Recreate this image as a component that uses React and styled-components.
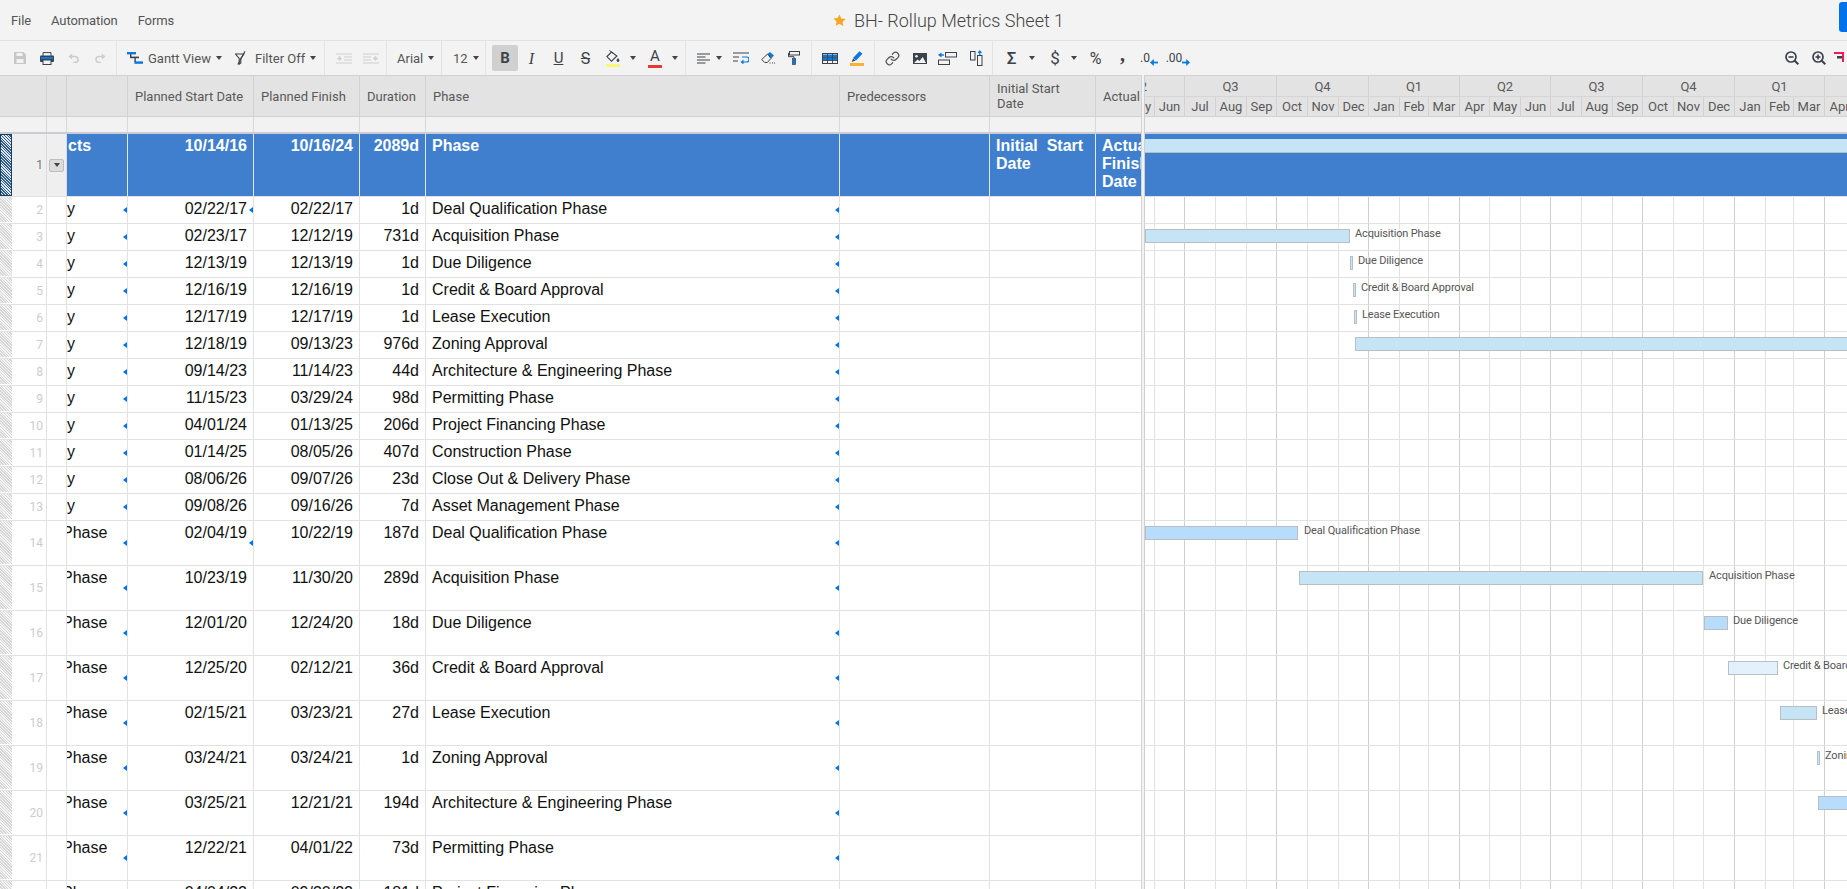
import React from 'react'
import styled, { createGlobalStyle } from 'styled-components'
import { Link } from 'lucide-react'

const GlobalStyle = createGlobalStyle`
  html, body { margin: 0; padding: 0; background: #fff; }
  body { font-family: Roboto, "Liberation Sans", sans-serif; overflow: hidden; }
  * { box-sizing: border-box; }
`

const COLS = '12px 35px 20px 61px 126px 106px 66px 414px 150px 106px 45px'
const DARK = '#3c4249'
const BLUE = '#0a78e0'

const Page = styled.div`
  width: 1847px;
  height: 889px;
  overflow: hidden;
  display: flex;
  flex-direction: column;
`

const TopBar = styled.div`
  height: 41px;
  flex: none;
  display: flex;
  align-items: center;
  background: #f3f3f3;
  border-bottom: 1px solid #e2e2e2;
`

const Menu = styled.div`
  width: 833px;
  flex: none;
  display: flex;
  gap: 20px;
  padding-left: 11px;
  font-size: 13px;
  letter-spacing: -0.1px;
  color: #555;
`

const Title = styled.div`
  display: flex;
  align-items: center;
  gap: 8px;
  font-size: 18px;
  font-weight: 300;
  color: #444;
`

const ShareButton = styled.div`
  margin-left: auto;
  width: 8px;
  height: 30px;
  margin-top: -6px;
  background: #0073ec;
  border-radius: 3px 0 0 3px;
`

const Toolbar = styled.div`
  height: 34px;
  flex: none;
  display: flex;
  background: #f3f3f3;
  overflow: hidden;
`

const Group = styled.div`
  width: ${p => p.$w}px;
  flex: none;
  display: flex;
  align-items: center;
  padding-left: ${p => p.$pad || 0}px;
  border-right: ${p => (p.$plain ? 'none' : '1px solid #e3e3e3')};
`

const RightTools = styled(Group)`
  margin-left: auto;
`

const Slot = styled.div`
  width: ${p => p.$w || 27}px;
  flex: none;
  height: 26px;
  display: flex;
  flex-direction: column;
  align-items: center;
  justify-content: center;
  color: ${DARK};
`

const LabelTool = styled.div`
  width: ${p => p.$w}px;
  flex: none;
  display: flex;
  align-items: center;
  font-size: 13px;
  color: #555;
`

const ToolText = styled.span`
  margin-left: ${p => p.$left || 0}px;
  margin-right: 5px;
`

const Caret = styled.span`
  width: 0;
  height: 0;
  flex: none;
  border-left: 3px solid transparent;
  border-right: 3px solid transparent;
  border-top: 4px solid #444;
`

const Active = styled(Slot)`
  width: 26px;
  margin-left: 1px;
  background: #d0d0d0;
  border-radius: 2px;
`

const Glyph = styled.span`
  font-size: ${p => p.$size || 15}px;
  line-height: 15px;
  font-weight: ${p => p.$weight || 400};
  font-style: ${p => (p.$italic ? 'italic' : 'normal')};
  font-family: ${p => (p.$serif ? '"Liberation Serif", serif' : 'Roboto, sans-serif')};
  text-decoration: ${p => p.$line || 'none'};
  transform: translateY(${p => p.$lift || 0}px);
  color: ${DARK};
`

const ColorBar = styled.span`
  width: 14px;
  height: 3px;
  margin-top: 1px;
  background: ${p => p.$color};
`

const DecimalTool = styled.div`
  display: flex;
  align-items: flex-end;
`

const Main = styled.div`
  flex: 1;
  display: flex;
  min-height: 0;
  overflow: hidden;
`

const Sheet = styled.div`
  width: 1141px;
  flex: none;
  overflow: hidden;
`

const Splitter = styled.div`
  width: 4px;
  flex: none;
  background: #f2f2f2;
  border-left: 1px solid #d4d4d4;
  border-right: 1px solid #cfcfcf;
`

const HeadRow = styled.div`
  display: grid;
  grid-template-columns: ${COLS};
  height: 42px;
  background: #e3e3e3;
  border-top: 1px solid #d2d2d2;
  border-bottom: 1px solid #d2d2d2;
`

const HeadCell = styled.div`
  display: flex;
  align-items: center;
  padding: 0 7px;
  overflow: hidden;
  font-size: 13px;
  line-height: 15px;
  color: #595959;
  white-space: pre-line;
  border-right: ${p => (p.$open ? 'none' : '1px solid #d2d2d2')};
`

const FilterRow = styled.div`
  display: grid;
  grid-template-columns: ${COLS};
  height: 17px;
  background: #f2f2f2;
  border-bottom: 2px solid #c9ced4;
`

const FilterCell = styled.div`
  border-right: ${p => (p.$open ? 'none' : '1px solid #d8d8d8')};
`

const SummaryRow = styled.div`
  display: grid;
  grid-template-columns: ${COLS};
  height: 63px;
  border-bottom: 1px solid #e2e2e2;
`

const SummaryCell = styled.div`
  background: #3f7fce;
  padding: 3px ${p => (p.$flush ? 0 : 6)}px 0 ${p => (p.$flush ? 1 : 6)}px;
  overflow: hidden;
  font-family: "Liberation Sans", Arial, sans-serif;
  font-size: 16px;
  font-weight: 700;
  line-height: 18px;
  color: #fff;
  white-space: pre;
  text-align: ${p => (p.$right ? 'right' : 'left')};
  border-right: ${p => (p.$open ? 'none' : '1px solid #dfe8f4')};
`

const GutterCell = styled.div`
  display: flex;
  align-items: center;
  justify-content: ${p => p.$center ? 'center' : 'flex-end'};
  padding-right: ${p => p.$center ? 0 : 3}px;
  background: ${p => p.$shade ? '#efefef' : '#fff'};
  font-size: 12px;
  color: ${p => p.$shade ? '#777' : '#ccc'};
  border-right: 1px solid ${p => p.$shade ? '#dcdcdc' : '#e2e2e2'};
`

const Handle = styled.div`
  margin-bottom: ${p => (p.$active ? 0 : 1)}px;
  background: repeating-linear-gradient(
    45deg,
    ${p => (p.$active ? '#2f5d8a' : '#d6d6d6')} 0 1px,
    ${p => (p.$active ? '#dfe7ef' : '#f5f5f5')} 1px 2px
  );
  border: ${p => (p.$active ? '1px solid #1d3f63' : 'none')};
`

const RowMenu = styled.div`
  width: 15px;
  height: 13px;
  display: flex;
  align-items: center;
  justify-content: center;
  background: #dcdcdc;
  border: 1px solid #bdbdbd;
  border-radius: 2px;
`

const Row = styled.div`
  display: grid;
  grid-template-columns: ${COLS};
  height: ${p => (p.$tall ? 45 : 27)}px;
  border-bottom: 1px solid #e2e2e2;
`

const Cell = styled.div`
  position: relative;
  padding: 1px ${p => (p.$flush ? 0 : 6)}px 0;
  overflow: hidden;
  font-family: "Liberation Sans", Arial, sans-serif;
  font-size: 16px;
  line-height: 22px;
  color: #111;
  white-space: nowrap;
  text-align: ${p => (p.$right ? 'right' : 'left')};
  text-indent: ${p => p.$indent || 0}px;
  border-right: ${p => (p.$open ? 'none' : '1px solid #e2e2e2')};
`

const Marker = styled.span`
  position: absolute;
  right: 0;
  top: 50%;
  margin-top: -3px;
  width: 0;
  height: 0;
  border-top: 3px solid transparent;
  border-bottom: 3px solid transparent;
  border-right: 4px solid #0073ec;
`

const Gantt = styled.div`
  flex: 1;
  min-width: 0;
  overflow: hidden;
  background: #fff;
`

const TimeHead = styled.div`
  height: 42px;
  margin-left: -52px;
  display: flex;
  flex-direction: column;
  background: #e3e3e3;
  border-top: 1px solid #d2d2d2;
  border-bottom: 1px solid #d2d2d2;
`

const TimeRow = styled.div`
  display: flex;
  flex: ${p => (p.$months ? 1 : 'none')};
  height: ${p => (p.$months ? 'auto' : '21px')};
  border-bottom: ${p => (p.$months ? 'none' : '1px solid #d6d6d6')};
`

const TimeCell = styled.div`
  width: ${p => p.$w}px;
  flex: none;
  display: flex;
  align-items: center;
  justify-content: center;
  font-size: 13px;
  color: #595959;
  border-left: 1px solid #d2d2d2;
`

const GanttFilter = styled.div`
  height: 17px;
  background: #f2f2f2;
  border-bottom: 2px solid #c9ced4;
`

const GanttSummary = styled.div`
  height: 63px;
  padding-top: 5px;
  background: #3f7fce;
  border-bottom: 1px solid #e2e2e2;
`

const SummaryBar = styled.div`
  height: 14px;
  background: #c5e4f6;
  border-bottom: 1px solid #b8bcc0;
`

const GanttBody = styled.div`
  position: relative;
`

const GridLines = styled.div`
  position: absolute;
  top: 0;
  bottom: 0;
  left: -52px;
  display: flex;
`

const GridLine = styled.div`
  width: ${p => p.$w}px;
  flex: none;
  height: 700px;
  border-left: 1px solid ${p => (p.$major ? '#cfcfcf' : '#e2e2e2')};
`

const GanttRow = styled.div`
  position: relative;
  height: ${p => (p.$tall ? 45 : 27)}px;
  border-bottom: 1px solid #e2e2e2;
`

const Bar = styled.div`
  position: absolute;
  top: 5px;
  left: ${p => p.$x - 1145}px;
  width: ${p => p.$w}px;
  height: 14px;
  background: ${p => p.$color};
  border: 1px solid #b9bec2;
`

const BarLabel = styled.span`
  position: absolute;
  top: 3px;
  left: ${p => p.$x - 1145}px;
  font-size: 11px;
  line-height: 13px;
  letter-spacing: -0.15px;
  color: #555;
  white-space: nowrap;
`

const SaveIcon = () => (
  <svg width="12" height="12" viewBox="0 0 12 12">
    <path d="M0 0h9.5L12 2.5V12H0z" fill="#c8c8c8" />
    <rect x="2.5" y="1" width="6" height="3" fill="#f3f3f3" />
    <rect x="2.5" y="7" width="7" height="4" fill="#f3f3f3" />
  </svg>
)

const PrintIcon = () => (
  <svg width="14" height="13" viewBox="0 0 14 13">
    <path d="M3 .6h8V4M3 4V.6" fill="none" stroke={DARK} />
    <rect x="0" y="3.5" width="14" height="6.5" rx="1" fill={DARK} />
    <rect x="1" y="5" width="12" height="2.2" fill={BLUE} />
    <rect x="3" y="8" width="8" height="4.5" fill="#f3f3f3" stroke={DARK} />
  </svg>
)

const UndoIcon = ({ flip }) => (
  <svg width="11" height="10" viewBox="0 0 11 10" style={flip ? { transform: 'scaleX(-1)' } : undefined}>
    <path d="M1.5 3.5h5.5a3 3 0 0 1 0 6H5" fill="none" stroke="#cdcdcd" strokeWidth="1.6" />
    <path d="M4.2.5v6L.5 3.5z" fill="#cdcdcd" />
  </svg>
)

const GanttIcon = () => (
  <svg width="16" height="12" viewBox="0 0 16 12">
    <rect x="0" y="0" width="9" height="2.4" fill={BLUE} />
    <rect x="3" y="2" width="1.4" height="4" fill={DARK} />
    <rect x="3" y="4.6" width="9" height="1.6" fill={DARK} />
    <rect x="7.4" y="6" width="1.4" height="4" fill={DARK} />
    <rect x="7.4" y="9.4" width="8.6" height="2.4" fill={BLUE} />
  </svg>
)

const FilterIcon = () => (
  <svg width="11" height="14" viewBox="0 0 11 14">
    <path d="M.5 3h8.4L5.800 7.400V12l-1.600 1.200V7.400z" fill="none" stroke={DARK} strokeWidth="1.100" />
    <path d="M10 .3L2.800 13.600" stroke={DARK} strokeWidth="1.100" />
  </svg>
)

const IndentIcon = ({ flip }) => (
  <svg width="16" height="11" viewBox="0 0 16 11" style={flip ? { transform: 'scaleX(-1)' } : undefined}>
    <path d="M0 1h16M0 4h8M0 7h8M0 10h16" stroke="#cfcfcf" strokeWidth="1" />
    <path d="M15 5.500h-4M13 3.500l-2.600 2 2.600 2z" stroke="#cfcfcf" fill="#cfcfcf" />
  </svg>
)

const BucketIcon = () => (
  <svg width="14" height="14" viewBox="0 0 14 14">
    <path d="M5.600 3L.9 7.600l4.600 4.600 5.400-5.200z" fill="#f3f3f3" stroke={DARK} strokeWidth="1.100" />
    <path d="M3.500 1.200l3 3" stroke={DARK} strokeWidth="1" />
    <path d="M12 9c-.9 1.200-1.400 1.900-1.400 2.600a1.400 1.400 0 0 0 2.800 0C13.400 10.900 12.900 10.200 12 9z" fill={DARK} />
  </svg>
)

const AlignIcon = () => (
  <svg width="13" height="11" viewBox="0 0 13 11">
    <path d="M0 1h13M0 4h8.500M0 7h13M0 10h8.500" stroke={DARK} strokeWidth="1" />
  </svg>
)

const WrapIcon = () => (
  <svg width="16" height="12" viewBox="0 0 16 12">
    <path d="M0 1h16M0 5h6M0 9h5" stroke={DARK} strokeWidth="1" />
    <path d="M9 5h4.500a1.800 1.800 0 0 1 0 5H9" fill="none" stroke={BLUE} strokeWidth="1.200" />
    <path d="M10.500 7.500v5L7.500 10z" fill={BLUE} />
  </svg>
)

const EraserIcon = () => (
  <svg width="15" height="12" viewBox="0 0 15 12">
    <path d="M6.500 2L9 0l4 3.400-3 3z" fill={BLUE} />
    <path d="M6.500 2L.7 7.500l3 3h2.600L10 6.400z" fill="#f3f3f3" stroke={DARK} strokeWidth="1" />
    <path d="M8.500 11h1M11 11h1M13 11h1" stroke={DARK} strokeWidth="1" />
  </svg>
)

const RollerIcon = () => (
  <svg width="12" height="14" viewBox="0 0 12 14">
    <rect x="1.500" y=".5" width="10" height="3.500" fill="none" stroke={DARK} />
    <path d="M1.500 2.200H.5v3.500h5.500v2" fill="none" stroke={DARK} />
    <rect x="4.500" y="7.500" width="3" height="6" fill={BLUE} stroke={DARK} strokeWidth=".7" />
  </svg>
)

const GridIcon = () => (
  <svg width="16" height="11" viewBox="0 0 16 11">
    <rect x=".5" y=".5" width="15" height="10" fill="#f3f3f3" stroke={DARK} />
    <rect x="1" y="1.500" width="14" height="2.500" fill={BLUE} />
    <rect x="1" y="5" width="14" height="2" fill={BLUE} />
    <path d="M5.500 1v9M10.500 1v9M1 4.500h14M1 7.500h14" stroke={DARK} strokeWidth=".9" />
  </svg>
)

const MarkerIcon = () => (
  <svg width="12" height="11" viewBox="0 0 12 11">
    <path d="M8.500.3l3 2.500L5 9.500l-3-2.500z" fill={BLUE} />
    <path d="M2 7.500l2.500 2.200L.8 10.800z" fill={DARK} />
  </svg>
)

const ImageIcon = () => (
  <svg width="14" height="11" viewBox="0 0 14 11">
    <rect width="14" height="11" fill={DARK} />
    <circle cx="3.500" cy="3.200" r="1.300" fill="#f3f3f3" />
    <path d="M1 10l3.500-3.500L6.500 8l3.200-4L13 10z" fill="#f3f3f3" />
  </svg>
)

const RowIndentIcon = () => (
  <svg width="19" height="13" viewBox="0 0 19 13">
    <path d="M1 3h5" stroke={BLUE} strokeWidth="1.400" />
    <path d="M3.500.5v5L0 3z" fill={BLUE} />
    <rect x="7.500" y=".5" width="11" height="4.500" fill="none" stroke={DARK} />
    <rect x=".5" y="8" width="11" height="4.500" fill="none" stroke={DARK} />
  </svg>
)

const ColumnIcon = () => (
  <svg width="13" height="16" viewBox="0 0 13 16">
    <rect x=".5" y="1.500" width="4.500" height="8.500" fill="none" stroke={DARK} />
    <rect x="7.500" y="5.500" width="4.500" height="10" fill="none" stroke={DARK} />
    <path d="M9.800 1v4" stroke={BLUE} strokeWidth="1.300" />
    <path d="M7.500 3l2.300-3 2.300 3z" fill={BLUE} />
  </svg>
)

const SmallArrow = ({ right }) => (
  <svg width="8" height="7" viewBox="0 0 8 7" style={right ? { transform: 'scaleX(-1)' } : undefined}>
    <path d="M3 3.500h5" stroke={BLUE} strokeWidth="1.800" />
    <path d="M3.800 0v7L0 3.500z" fill={BLUE} />
  </svg>
)

const ZoomIcon = ({ plus }) => (
  <svg width="14" height="14" viewBox="0 0 14 14">
    <circle cx="6" cy="6" r="5" fill="none" stroke={DARK} strokeWidth="1.700" />
    <path d="M9.500 9.500L13.300 13.300" stroke={DARK} strokeWidth="2" />
    <path d="M3.500 6h5" stroke={DARK} strokeWidth="1.600" />
    {plus && <path d="M6 3.500v5" stroke={DARK} strokeWidth="1.600" />}
  </svg>
)

const CriticalIcon = () => (
  <svg width="12" height="12" viewBox="0 0 12 12">
    <path d="M0 1h9v9" fill="none" stroke="#ee1d5a" strokeWidth="2" />
    <rect x="3" y="4" width="5" height="2.500" fill={DARK} />
  </svg>
)

const Star = () => (
  <svg width="13" height="13" viewBox="0 0 24 24">
    <path d="M12 1l3.400 7.300 7.900 1-5.800 5.500 1.500 7.900L12 18l-7 3.700 1.500-7.900L.7 8.300l7.900-1z" fill="#f6a623" />
  </svg>
)

const QUARTERS = [
  ['Q2', 91], ['Q3', 92], ['Q4', 92], ['Q1', 91], ['Q2', 91],
  ['Q3', 92], ['Q4', 92], ['Q1', 90], ['Q2', 91],
]

const MONTHS = [
  ['Apr', 30, 1], ['May', 31], ['Jun', 30], ['Jul', 31, 1], ['Aug', 31], ['Sep', 30],
  ['Oct', 31, 1], ['Nov', 31], ['Dec', 30], ['Jan', 31, 1], ['Feb', 29], ['Mar', 31],
  ['Apr', 30, 1], ['May', 31], ['Jun', 30], ['Jul', 31, 1], ['Aug', 31], ['Sep', 30],
  ['Oct', 31, 1], ['Nov', 30], ['Dec', 31], ['Jan', 31, 1], ['Feb', 28], ['Mar', 31],
  ['Apr', 30, 1],
]

const LIGHT = '#c5e4f6'
const MID = '#b8dcfb'
const PALE = '#e3f1fc'

// [row, name, start, finish, duration, phase, marks start cell, bar]
const ROWS = [
  [2, 'y', '02/22/17', '02/22/17', '1d', 'Deal Qualification Phase', true],
  [3, 'y', '02/23/17', '12/12/19', '731d', 'Acquisition Phase', false, { x: 1145, w: 205, c: LIGHT, l: 1355 }],
  [4, 'y', '12/13/19', '12/13/19', '1d', 'Due Diligence', false, { x: 1350, w: 3, c: LIGHT, l: 1358 }],
  [5, 'y', '12/16/19', '12/16/19', '1d', 'Credit & Board Approval', false, { x: 1353, w: 3, c: LIGHT, l: 1361 }],
  [6, 'y', '12/17/19', '12/17/19', '1d', 'Lease Execution', false, { x: 1354, w: 3, c: LIGHT, l: 1362 }],
  [7, 'y', '12/18/19', '09/13/23', '976d', 'Zoning Approval', false, { x: 1355, w: 600, c: LIGHT }],
  [8, 'y', '09/14/23', '11/14/23', '44d', 'Architecture & Engineering Phase'],
  [9, 'y', '11/15/23', '03/29/24', '98d', 'Permitting Phase'],
  [10, 'y', '04/01/24', '01/13/25', '206d', 'Project Financing Phase'],
  [11, 'y', '01/14/25', '08/05/26', '407d', 'Construction Phase'],
  [12, 'y', '08/06/26', '09/07/26', '23d', 'Close Out & Delivery Phase'],
  [13, 'y', '09/08/26', '09/16/26', '7d', 'Asset Management Phase'],
  [14, 'Phase', '02/04/19', '10/22/19', '187d', 'Deal Qualification Phase', true, { x: 1145, w: 153, c: MID, l: 1304 }],
  [15, 'Phase', '10/23/19', '11/30/20', '289d', 'Acquisition Phase', false, { x: 1299, w: 404, c: LIGHT, l: 1709 }],
  [16, 'Phase', '12/01/20', '12/24/20', '18d', 'Due Diligence', false, { x: 1704, w: 24, c: MID, l: 1733 }],
  [17, 'Phase', '12/25/20', '02/12/21', '36d', 'Credit & Board Approval', false, { x: 1728, w: 50, c: PALE, l: 1783 }],
  [18, 'Phase', '02/15/21', '03/23/21', '27d', 'Lease Execution', false, { x: 1780, w: 37, c: LIGHT, l: 1822 }],
  [19, 'Phase', '03/24/21', '03/24/21', '1d', 'Zoning Approval', false, { x: 1817, w: 3, c: LIGHT, l: 1825 }],
  [20, 'Phase', '03/25/21', '12/21/21', '194d', 'Architecture & Engineering Phase', false, { x: 1818, w: 60, c: MID }],
  [21, 'Phase', '12/22/21', '04/01/22', '73d', 'Permitting Phase'],
  [22, 'Phase', '04/04/22', '09/30/22', '181d', 'Project Financing Phase'],
]

const isTall = n => n > 13

const ToolBarRow = () => (
  <Toolbar>
    <Group $w={117} $pad={6}>
      <Slot><SaveIcon /></Slot>
      <Slot><PrintIcon /></Slot>
      <Slot><UndoIcon /></Slot>
      <Slot><UndoIcon flip /></Slot>
    </Group>
    <Group $w={208} $pad={10}>
      <LabelTool $w={108}>
        <GanttIcon />
        <ToolText $left={5}>Gantt View</ToolText>
        <Caret />
      </LabelTool>
      <LabelTool $w={85}>
        <FilterIcon />
        <ToolText $left={9}>Filter Off</ToolText>
        <Caret />
      </LabelTool>
    </Group>
    <Group $w={62} $pad={5}>
      <Slot><IndentIcon flip /></Slot>
      <Slot><IndentIcon /></Slot>
    </Group>
    <Group $w={55} $pad={10}>
      <LabelTool $w={40}>
        <ToolText>Arial</ToolText>
        <Caret />
      </LabelTool>
    </Group>
    <Group $w={44} $pad={11}>
      <LabelTool $w={28}>
        <ToolText>12</ToolText>
        <Caret />
      </LabelTool>
    </Group>
    <Group $w={200} $pad={5}>
      <Active><Glyph $weight={700}>B</Glyph></Active>
      <Slot><Glyph $italic $serif $size={16}>I</Glyph></Slot>
      <Slot><Glyph $line="underline">U</Glyph></Slot>
      <Slot><Glyph $line="line-through" $size={16}>S</Glyph></Slot>
      <Slot>
        <BucketIcon />
        <ColorBar $color="#f7f77a" />
      </Slot>
      <Slot $w={14}><Caret /></Slot>
      <Slot $w={30}>
        <Glyph>A</Glyph>
        <ColorBar $color="#e53935" />
      </Slot>
      <Slot $w={10}><Caret /></Slot>
    </Group>
    <Group $w={126} $pad={5}>
      <Slot $w={25}><AlignIcon /></Slot>
      <Slot $w={6}><Caret /></Slot>
      <Slot $w={38}><WrapIcon /></Slot>
      <Slot $w={16}><EraserIcon /></Slot>
      <Slot $w={36}><RollerIcon /></Slot>
    </Group>
    <Group $w={63} $pad={4}>
      <Slot><GridIcon /></Slot>
      <Slot>
        <MarkerIcon />
        <ColorBar $color="#f9b233" />
      </Slot>
    </Group>
    <Group $w={118} $pad={3}>
      <Slot $w={28}><Link size={15} color="#555" /></Slot>
      <Slot $w={27}><ImageIcon /></Slot>
      <Slot $w={29}><RowIndentIcon /></Slot>
      <Slot $w={28}><ColumnIcon /></Slot>
    </Group>
    <Group $w={200} $pad={5} $plain>
      <Slot><Glyph $size={17} $weight={500}>Σ</Glyph></Slot>
      <Slot $w={13}><Caret /></Slot>
      <Slot $w={34}><Glyph $size={17}>$</Glyph></Slot>
      <Slot $w={4}><Caret /></Slot>
      <Slot $w={39}><Glyph $size={16}>%</Glyph></Slot>
      <Slot $w={15}><Glyph $weight={700} $serif $size={20} $lift={-4}>,</Glyph></Slot>
      <Slot $w={38}>
        <DecimalTool><Glyph $size={12}>.0</Glyph><SmallArrow /></DecimalTool>
      </Slot>
      <Slot $w={20}>
        <DecimalTool><Glyph $size={12}>.00</Glyph><SmallArrow right /></DecimalTool>
      </Slot>
    </Group>
    <RightTools $w={69} $plain>
      <Slot><ZoomIcon /></Slot>
      <Slot><ZoomIcon plus /></Slot>
      <Slot $w={15}><CriticalIcon /></Slot>
    </RightTools>
  </Toolbar>
)

const SheetGrid = () => (
  <Sheet>
    <HeadRow>
      <HeadCell $open />
      <HeadCell />
      <HeadCell />
      <HeadCell />
      <HeadCell>Planned Start Date</HeadCell>
      <HeadCell>Planned Finish</HeadCell>
      <HeadCell>Duration</HeadCell>
      <HeadCell>Phase</HeadCell>
      <HeadCell>Predecessors</HeadCell>
      <HeadCell>{'Initial Start\nDate'}</HeadCell>
      <HeadCell $open>Actual</HeadCell>
    </HeadRow>
    <FilterRow>
      <FilterCell $open />
      <FilterCell />
      <FilterCell />
      <FilterCell />
      <FilterCell />
      <FilterCell />
      <FilterCell />
      <FilterCell />
      <FilterCell />
      <FilterCell />
      <FilterCell $open />
    </FilterRow>
    <SummaryRow>
      <Handle $active />
      <GutterCell $shade>1</GutterCell>
      <GutterCell $shade $center><RowMenu><Caret /></RowMenu></GutterCell>
      <SummaryCell $flush>cts</SummaryCell>
      <SummaryCell $right>10/14/16</SummaryCell>
      <SummaryCell $right>10/16/24</SummaryCell>
      <SummaryCell $right>2089d</SummaryCell>
      <SummaryCell>Phase</SummaryCell>
      <SummaryCell />
      <SummaryCell>{'Initial  Start\nDate'}</SummaryCell>
      <SummaryCell $open>{'Actual\nFinish\nDate'}</SummaryCell>
    </SummaryRow>
    {ROWS.map(([n, name, start, finish, duration, phase, mark]) => (
      <Row key={n} $tall={isTall(n)}>
        <Handle />
        <GutterCell>{n}</GutterCell>
        <GutterCell />
        <Cell $flush $indent={name === 'Phase' ? -5 : 0}>{name}<Marker /></Cell>
        <Cell $right>{start}{mark && <Marker />}</Cell>
        <Cell $right>{finish}</Cell>
        <Cell $right>{duration}</Cell>
        <Cell>{phase}<Marker /></Cell>
        <Cell />
        <Cell />
        <Cell $open />
      </Row>
    ))}
  </Sheet>
)

const Timeline = () => (
  <Gantt>
    <TimeHead>
      <TimeRow>
        {QUARTERS.map(([label, w], i) => <TimeCell key={i} $w={w}>{label}</TimeCell>)}
      </TimeRow>
      <TimeRow $months>
        {MONTHS.map(([label, w], i) => <TimeCell key={i} $w={w}>{label}</TimeCell>)}
      </TimeRow>
    </TimeHead>
    <GanttFilter />
    <GanttSummary><SummaryBar /></GanttSummary>
    <GanttBody>
      <GridLines>
        {MONTHS.map(([label, w, major], i) => <GridLine key={i} $w={w} $major={major} />)}
      </GridLines>
      {ROWS.map(([n, , , , , phase, , bar]) => (
        <GanttRow key={n} $tall={isTall(n)}>
          {bar && <Bar $x={bar.x} $w={bar.w} $color={bar.c} />}
          {bar && bar.l && <BarLabel $x={bar.l}>{phase}</BarLabel>}
        </GanttRow>
      ))}
    </GanttBody>
  </Gantt>
)

export default function App() {
  return (
    <Page>
      <GlobalStyle />
      <TopBar>
        <Menu>
          <span>File</span>
          <span>Automation</span>
          <span>Forms</span>
        </Menu>
        <Title><Star />BH- Rollup Metrics Sheet 1</Title>
        <ShareButton />
      </TopBar>
      <ToolBarRow />
      <Main>
        <SheetGrid />
        <Splitter />
        <Timeline />
      </Main>
    </Page>
  )
}
